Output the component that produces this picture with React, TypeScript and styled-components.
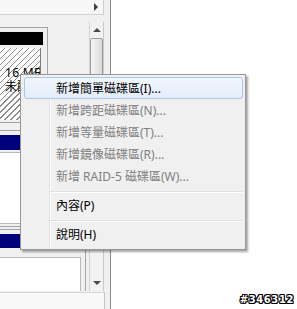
import React from "react";
import styled, { createGlobalStyle } from "styled-components";

const GlobalStyle = createGlobalStyle`
  html, body {
    margin: 0;
    padding: 0;
    background: #fff;
  }
  body {
    font-family: "Noto Sans", "Noto Sans CJK TC", sans-serif;
  }
`;

const Page = styled.div`
  position: relative;
  width: 297px;
  height: 309px;
  overflow: hidden;
  display: flex;
  background: #fff;
`;

const Console = styled.div`
  width: 111px;
  height: 100%;
  box-sizing: border-box;
  border-right: 1px solid #8b8b8b;
  background: #f0f0f0;
  display: flex;
  flex-direction: column;
`;

const TopBar = styled.div`
  display: flex;
  height: 15px;
  margin-bottom: 7px;
`;

const HTrack = styled.div`
  width: 104px;
  box-sizing: border-box;
  display: flex;
  justify-content: flex-end;
  align-items: flex-start;
  padding: 3px 5px 0 0;
  background: #f7f7f7;
  border-right: 1px solid #cfcfcf;
  border-bottom: 1px solid #d2d2d2;
`;

const ArrowRight = styled.span`
  width: 0;
  height: 0;
  border-left: 4px solid #3c3c3c;
  border-top: 4px solid transparent;
  border-bottom: 4px solid transparent;
`;

const DiskPane = styled.div`
  display: flex;
  height: 269px;
`;

const DiskList = styled.div`
  width: 89px;
  padding-top: 5px;
  display: flex;
  flex-direction: column;
  overflow: hidden;
`;

const Cell = styled.div<{ $w: number; $gap: number }>`
  width: ${(p) => p.$w}px;
  margin-top: ${(p) => p.$gap}px;
  box-sizing: border-box;
  border: 1px solid #a3a3a3;
  border-left: none;
  padding: 4px 4px 2px 0;
  background: #f0f0f0;
`;

const Bar = styled.div<{ $color: string; $h: number }>`
  height: ${(p) => p.$h}px;
  background: ${(p) => p.$color};
`;

const Hatched = styled.div`
  margin-top: 3px;
  width: 41px;
  height: 72px;
  box-sizing: border-box;
  border-right: 1px solid #7d7d7d;
  background: repeating-linear-gradient(
    135deg,
    #ffffff 0px,
    #ffffff 3.2px,
    #8c8c8c 3.2px,
    #8c8c8c 4.2px
  );
  padding: 18px 0 0 5px;
  overflow: hidden;
  white-space: nowrap;
  font-size: 12px;
  line-height: 14px;
  letter-spacing: 0.3px;
  color: #000;
`;

const Plain = styled.div<{ $h: number; $gap: number }>`
  margin-top: ${(p) => p.$gap}px;
  height: ${(p) => p.$h}px;
  box-sizing: border-box;
  background: #fff;
  border: 1px solid #b9b9b9;
  border-left: none;
`;

const VScroll = styled.div`
  width: 15px;
  box-sizing: border-box;
  border-left: 1px solid #d4d4d4;
  border-right: 1px solid #c9c9c9;
  background: #f2f2f2;
  display: flex;
  flex-direction: column;
  align-items: center;
`;

const ScrollButton = styled.div`
  height: 16px;
  display: flex;
  align-items: center;
  justify-content: center;
`;

const ArrowUp = styled.span`
  width: 0;
  height: 0;
  border-bottom: 4px solid #4a4a4a;
  border-left: 4px solid transparent;
  border-right: 4px solid transparent;
`;

const ArrowDown = styled(ArrowUp)`
  border-bottom: none;
  border-top: 4px solid #4a4a4a;
`;

const Thumb = styled.div`
  width: 13px;
  height: 180px;
  box-sizing: border-box;
  border: 1px solid #9a9a9a;
  border-radius: 2px;
  background: linear-gradient(90deg, #f4f4f4, #e6e6e6 60%, #d9d9d9);
`;

const Spacer = styled.div`
  flex: 1;
`;

const Splitter = styled.div`
  flex: 1;
  background: #f0f0f0;
`;

const StatusBand = styled.div`
  margin-top: 1px;
  width: 105px;
  flex: 1;
  box-sizing: border-box;
  background: #f8f8f8;
  border-top: 1px solid #d6d6d6;
  border-right: 1px solid #c4c4c4;
`;

const Blank = styled.div`
  flex: 1;
  background: #fff;
`;

const Menu = styled.div`
  position: absolute;
  left: 20px;
  top: 74px;
  width: 226px;
  box-sizing: border-box;
  padding: 2px 2px 4px 3px;
  background: #f0f0f0;
  border: 1px solid #979797;
  box-shadow: 2px 2px 2px rgba(0, 0, 0, 0.35);

  &::before {
    content: "";
    position: absolute;
    left: 28px;
    top: 2px;
    bottom: 2px;
    width: 1px;
    background: #e3e3e3;
    box-shadow: 1px 0 0 #fff;
  }
`;

const Item = styled.div<{ $hot?: boolean; $off?: boolean }>`
  position: relative;
  height: 22px;
  box-sizing: border-box;
  padding-left: 31px;
  display: flex;
  align-items: center;
  font-size: 12px;
  white-space: nowrap;
  color: ${(p) => (p.$off ? "#7f7f7f" : "#000")};
  border: 1px solid ${(p) => (p.$hot ? "#a9c8ec" : "transparent")};
  border-radius: 3px;
  background: ${(p) =>
    p.$hot ? "linear-gradient(#f2f7fd, #e3edfa)" : "transparent"};
`;

const Separator = styled.div`
  position: relative;
  height: 7px;
  margin-left: 26px;

  &::after {
    content: "";
    position: absolute;
    left: 0;
    right: 0;
    top: 4px;
    height: 1px;
    background: #e0e0e0;
    box-shadow: 0 1px 0 #fff;
  }
`;

const Stamp = styled.div`
  position: absolute;
  right: 3px;
  bottom: 4px;
  font-family: "DejaVu Sans", sans-serif;
  font-weight: 700;
  font-size: 10px;
  line-height: 10px;
  letter-spacing: 0.6px;
  color: #fff;
  text-shadow: 1px 0 0 #000, -1px 0 0 #000, 0 1px 0 #000, 0 -1px 0 #000,
    1px 1px 0 #000, -1px -1px 0 #000, 1px -1px 0 #000, -1px 1px 0 #000;
`;

const menuItems = [
  { label: "新增簡單磁碟區(I)...", hot: true },
  { label: "新增跨距磁碟區(N)...", off: true },
  { label: "新增等量磁碟區(T)...", off: true },
  { label: "新增鏡像磁碟區(R)...", off: true },
  { label: "新增 RAID-5 磁碟區(W)...", off: true },
];

export default function App() {
  return (
    <>
      <GlobalStyle />
      <Page>
        <Console>
          <TopBar>
            <HTrack>
              <ArrowRight />
            </HTrack>
          </TopBar>
          <DiskPane>
            <DiskList>
              <Cell $w={48} $gap={0}>
                <Bar $color="#000" $h={13} />
                <Hatched>
                  16 MB
                  <br />
                  未配置
                </Hatched>
              </Cell>
              <Cell $w={86} $gap={7}>
                <Bar $color="#00007c" $h={15} />
                <Plain $h={72} $gap={2} />
              </Cell>
              <Cell $w={86} $gap={2}>
                <Bar $color="#00007c" $h={14} />
                <Plain $h={40} $gap={9} />
              </Cell>
            </DiskList>
            <VScroll>
              <ScrollButton>
                <ArrowUp />
              </ScrollButton>
              <Thumb />
              <Spacer />
              <ScrollButton>
                <ArrowDown />
              </ScrollButton>
            </VScroll>
            <Splitter />
          </DiskPane>
          <StatusBand />
        </Console>
        <Blank />

        <Menu>
          {menuItems.map((m) => (
            <Item key={m.label} $hot={m.hot} $off={m.off}>
              {m.label}
            </Item>
          ))}
          <Separator />
          <Item>內容(P)</Item>
          <Separator />
          <Item>說明(H)</Item>
        </Menu>

        <Stamp>#346312</Stamp>
      </Page>
    </>
  );
}
